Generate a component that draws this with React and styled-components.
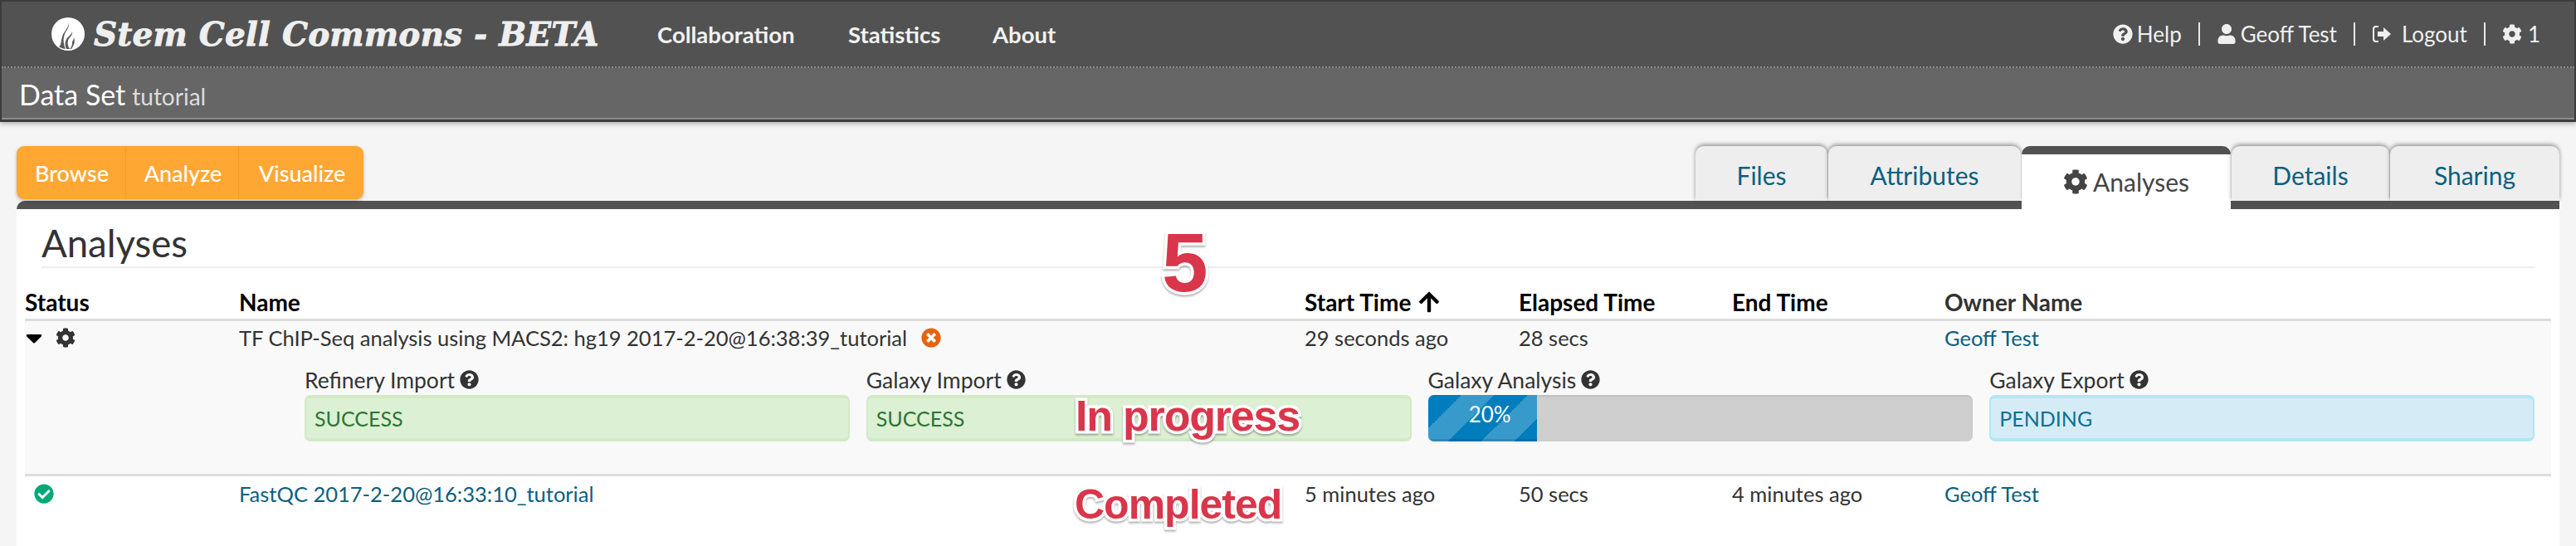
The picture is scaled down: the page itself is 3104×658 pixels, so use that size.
import React from 'react'
import styled, { createGlobalStyle } from 'styled-components'
import {
  FaCog,
  FaQuestionCircle,
  FaUser,
  FaCheckCircle,
  FaTimesCircle,
  FaArrowUp,
  FaCaretDown
} from 'react-icons/fa'

const sans = '"Lato", "Noto Sans", sans-serif'

const GlobalStyle = createGlobalStyle`
  html, body {
    margin: 0;
    padding: 0;
    height: 658px;
    overflow: hidden;
    background: #f5f5f5;
    font-family: ${sans};
    color: #333;
  }
  * { box-sizing: border-box; }
`

const Page = styled.div`
  position: relative;
  width: 3104px;
  height: 658px;
  overflow: hidden;
`

const Header = styled.header`
  border: solid #3c3c3c;
  border-width: 2px 2px 3px;
  box-shadow: 0 2px 6px rgba(0, 0, 0, 0.3);
`

const TopBar = styled.div`
  display: flex;
  align-items: center;
  height: 80px;
  padding: 0 41px 0 60px;
  background: #525252;
  border-bottom: 2px dotted #8a8a8a;
`

const Brand = styled.div`
  display: flex;
  align-items: center;
  gap: 11px;
  width: 730px;
`

const Title = styled.span`
  font-family: "DejaVu Serif", serif;
  font-weight: 700;
  font-style: italic;
  font-size: 39px;
  letter-spacing: 0.2px;
  color: #efefef;
  -webkit-text-stroke: 0.8px #efefef;
  white-space: nowrap;
`

const MainNav = styled.nav`
  display: flex;
  font-weight: 700;
  font-size: 27.5px;
  color: #f2f2f2;
`

const NavLink = styled.a`
  width: ${p => p.$w}px;
`

const UserNav = styled.div`
  display: flex;
  align-items: center;
  margin-left: auto;
  font-size: 26px;
  color: #f0f0f0;
`

const UserItem = styled.span`
  display: flex;
  align-items: center;
  gap: ${p => p.$gap || 5}px;
  white-space: nowrap;

  & svg {
    font-size: 24px;
  }
`

const Sep = styled.span`
  width: 2px;
  height: 28px;
  margin: 0 20px;
  background: #e8e8e8;
`

const SubBar = styled.div`
  display: flex;
  align-items: baseline;
  gap: 8px;
  height: 62px;
  padding: 11px 0 0 21px;
  background: #666;
  border-bottom: 2px solid #8c8c8c;
  color: #fff;
  font-size: 34px;
`

const SubTitle = styled.small`
  font-size: 28px;
  color: #ddd;
`

const Main = styled.main`
  padding: 29px 20px 0;
`

const TopRow = styled.div`
  display: flex;
  justify-content: space-between;
  height: 66px;
`

const ButtonGroup = styled.div`
  display: flex;
  height: 64px;
  width: 418px;
  background: #ffa733;
  border-radius: 9px;
  box-shadow: 0 2px 4px rgba(0, 0, 0, 0.25);
`

const GroupButton = styled.button`
  flex: 0 0 ${p => p.$w}px;
  padding: 0 0 0 2px;
  border: 0;
  background: none;
  font-family: ${sans};
  font-weight: 500;
  font-size: 27px;
  color: #fff;

  & + & {
    border-left: 1px solid #f29c2b;
  }
`

const Tabs = styled.div`
  display: flex;
  gap: 1px;
  position: relative;
  z-index: 1;
`

const Tab = styled.div`
  display: flex;
  align-items: center;
  justify-content: center;
  gap: 6px;
  width: ${p => p.$w}px;
  height: ${p => (p.$active ? 76 : 66)}px;
  padding-top: ${p => (p.$active ? 0 : 4)}px;
  border-radius: 10px 10px 0 0;
  border-top: ${p => (p.$active ? '10px solid #525252' : 0)};
  background: ${p => (p.$active ? '#fff' : '#eee')};
  color: ${p => (p.$active ? '#444' : '#0b5f80')};
  box-shadow: ${p => (p.$active ? 'none' : '0 -2px 5px rgba(0, 0, 0, 0.4)')};
  font-size: 30px;
`

const Panel = styled.section`
  height: 416px;
  padding: 0 10px;
  background: #fff;
  border-top: 10px solid #525252;
  border-radius: 10px 0 0 0;
`

const PanelHead = styled.div`
  margin: 0 19px 0 20px;
  padding-top: 15px;
  height: 71px;
  border-bottom: 2px solid #eee;
`

const Heading = styled.h2`
  margin: 0;
  font-weight: 400;
  font-size: 45.5px;
  line-height: 52px;
  color: #333;
`

const cols = '258px 1284px 258px 257px 256px 1fr'

const HeadRow = styled.div`
  display: grid;
  grid-template-columns: ${cols};
  align-items: center;
  height: 64px;
  padding-top: 20px;
  border-bottom: 3px solid #ddd;
  font-weight: 700;
  font-size: 28px;
  color: #000;
`

const HeadCell = styled.div`
  display: flex;
  align-items: center;
  gap: 8px;
  color: ${p => p.$color || 'inherit'};
`

const Row = styled.div`
  background: ${p => (p.$expanded ? '#f9f9f9' : '#fff')};
  border-bottom: ${p => (p.$expanded ? '3px solid #ddd' : 0)};
  height: ${p => (p.$expanded ? '187px' : 'auto')};
`

const RowCells = styled.div`
  display: grid;
  grid-template-columns: ${cols};
  align-items: center;
  height: ${p => p.$h}px;
  font-size: 25.5px;
  color: #333;
`

const StatusIcons = styled.div`
  display: flex;
  align-items: center;
  gap: 16px;
  padding-left: ${p => p.$indent || 0}px;
  color: #333;
`

const NameCell = styled.div`
  display: flex;
  align-items: center;
  gap: 17px;
`

const TableLink = styled.a`
  color: #0b5f80;
`

const Stages = styled.div`
  display: grid;
  grid-template-columns: repeat(4, 1fr);
  gap: 20px;
  padding: 12px 20px 0 337px;
`

const Stage = styled.div`
  display: flex;
  flex-direction: column;
`

const StageLabel = styled.div`
  display: flex;
  align-items: center;
  gap: 6px;
  height: 37px;
  font-size: 26.5px;
  color: #333;

  & svg {
    font-size: 23px;
  }
`

const StatusBox = styled.div`
  display: flex;
  align-items: center;
  height: 56px;
  padding-left: 10px;
  border: solid ${p => (p.$kind === 'info' ? '#b0e8f3' : '#d3e9c7')};
  border-width: 4px 2px;
  border-radius: 7px;
  background: ${p => (p.$kind === 'info' ? '#d5ecf6' : '#dcf0d4')};
  color: ${p => (p.$kind === 'info' ? '#0f7095' : '#2f7435')};
  font-size: 25px;
`

const ProgressTrack = styled.div`
  height: 56px;
  border-radius: 7px;
  overflow: hidden;
  background: #cfcfcf;
  box-shadow: inset 0 2px 3px rgba(0, 0, 0, 0.08);
`

const ProgressBar = styled.div`
  height: 100%;
  padding: 3px 0 0 18px;
  background-color: #007dbd;
  background-image: linear-gradient(
    -45deg,
    rgba(255, 255, 255, 0.22) 25%,
    transparent 25%,
    transparent 50%,
    rgba(255, 255, 255, 0.22) 50%,
    rgba(255, 255, 255, 0.22) 75%,
    transparent 75%
  );
  background-size: 80px 80px;
  box-shadow: inset 0 -3px 0 rgba(0, 0, 0, 0.12);
  text-align: center;
  font-size: 26px;
  line-height: 40px;
  color: #fff;
`

const Note = styled.div`
  position: absolute;
  left: ${p => p.$x}px;
  top: ${p => p.$y}px;
  font-family: "Liberation Sans", Arial, sans-serif;
  font-weight: 700;
  font-size: ${p => p.$size}px;
  letter-spacing: ${p => p.$spacing || 0}px;
  line-height: 1;
  white-space: nowrap;
  color: #d9364b;
  -webkit-text-stroke: 7px #fff;
  paint-order: stroke fill;
  filter: drop-shadow(0 2px 1px rgba(0, 0, 0, 0.3));
  z-index: 2;
`

const FlameLogo = () => (
  <svg width="40" height="40" viewBox="0 0 40 40" aria-hidden="true">
    <circle cx="20" cy="20" r="20" fill="#fff" />
    <path
      d="M21 6c1 6-3 9-5 14-2 5-2 11 1 18-4-1-6-1-8-3 3-1 2-6 4-12 2-7 8-10 8-17z"
      fill="#5a5a5a"
    />
    <path
      d="M25 17c1 5-4 7-5 11-1 4 0 7 2 10h-4c-2-4-2-8 0-12 2-3 6-5 7-9z"
      fill="#5a5a5a"
    />
    <path
      d="M27 24c2 5 0 10-3 14h-2c3-3 3-6 3-8 0-2 2-3 2-6z"
      fill="#5a5a5a"
    />
  </svg>
)

const SignOutIcon = () => (
  <svg width="24" height="22" viewBox="0 0 24 22" aria-hidden="true">
    <path
      d="M8 2H5C3 2 2 3 2 5v12c0 2 1 3 3 3h3"
      fill="none"
      stroke="currentColor"
      strokeWidth="2"
    />
    <path d="M7 8h7V3l9 8-9 8v-5H7z" fill="currentColor" />
  </svg>
)

const Help = () => <FaQuestionCircle />

const tabs = [
  { label: 'Files', w: 159 },
  { label: 'Attributes', w: 232 },
  { label: 'Analyses', w: 252, active: true },
  { label: 'Details', w: 190 },
  { label: 'Sharing', w: 204 }
]

const App = () => (
  <Page>
    <GlobalStyle />
    <Header>
      <TopBar>
        <Brand>
          <FlameLogo />
          <Title>Stem Cell Commons - BETA</Title>
        </Brand>
        <MainNav>
          <NavLink $w={230}>Collaboration</NavLink>
          <NavLink $w={174}>Statistics</NavLink>
          <NavLink>About</NavLink>
        </MainNav>
        <UserNav>
          <UserItem><FaQuestionCircle /> Help</UserItem>
          <Sep />
          <UserItem><FaUser /> Geoff Test</UserItem>
          <Sep />
          <UserItem $gap={12}><SignOutIcon /> Logout</UserItem>
          <Sep />
          <UserItem $gap={7}><FaCog /> 1</UserItem>
        </UserNav>
      </TopBar>
      <SubBar>
        Data Set <SubTitle>tutorial</SubTitle>
      </SubBar>
    </Header>

    <Main>
      <TopRow>
        <ButtonGroup>
          <GroupButton $w={131}>Browse</GroupButton>
          <GroupButton $w={136}>Analyze</GroupButton>
          <GroupButton $w={151}>Visualize</GroupButton>
        </ButtonGroup>
        <Tabs>
          {tabs.map(t => (
            <Tab key={t.label} $w={t.w} $active={t.active}>
              {t.active && <FaCog />}
              {t.label}
            </Tab>
          ))}
        </Tabs>
      </TopRow>

      <Panel>
        <PanelHead>
          <Heading>Analyses</Heading>
        </PanelHead>

        <HeadRow>
          <HeadCell>Status</HeadCell>
          <HeadCell>Name</HeadCell>
          <HeadCell>Start Time <FaArrowUp /></HeadCell>
          <HeadCell>Elapsed Time</HeadCell>
          <HeadCell>End Time</HeadCell>
          <HeadCell $color="#333">Owner Name</HeadCell>
        </HeadRow>

        <Row $expanded>
          <RowCells $h={40}>
            <StatusIcons>
              <FaCaretDown size={32} color="#000" style={{ margin: '0 -6px 0 -5px' }} />
              <FaCog size={24} />
            </StatusIcons>
            <NameCell>
              TF ChIP-Seq analysis using MACS2: hg19 2017-2-20@16:38:39_tutorial
              <FaTimesCircle size={24} color="#e8620c" />
            </NameCell>
            <div>29 seconds ago</div>
            <div>28 secs</div>
            <div />
            <TableLink>Geoff Test</TableLink>
          </RowCells>
          <Stages>
            <Stage>
              <StageLabel>Refinery Import <Help /></StageLabel>
              <StatusBox>SUCCESS</StatusBox>
            </Stage>
            <Stage>
              <StageLabel>Galaxy Import <Help /></StageLabel>
              <StatusBox>SUCCESS</StatusBox>
            </Stage>
            <Stage>
              <StageLabel>Galaxy Analysis <Help /></StageLabel>
              <ProgressTrack>
                <ProgressBar style={{ width: '20%' }}>20%</ProgressBar>
              </ProgressTrack>
            </Stage>
            <Stage>
              <StageLabel>Galaxy Export <Help /></StageLabel>
              <StatusBox $kind="info">PENDING</StatusBox>
            </Stage>
          </Stages>
        </Row>

        <Row>
          <RowCells $h={42}>
            <StatusIcons $indent={11}>
              <FaCheckCircle size={24} color="#00a878" />
            </StatusIcons>
            <TableLink>FastQC 2017-2-20@16:33:10_tutorial</TableLink>
            <div>5 minutes ago</div>
            <div>50 secs</div>
            <div>4 minutes ago</div>
            <TableLink>Geoff Test</TableLink>
          </RowCells>
        </Row>
      </Panel>
    </Main>

    <Note $x={1400} $y={266} $size={100}>5</Note>
    <Note $x={1296} $y={475} $size={52} $spacing={-1.2}>In progress</Note>
    <Note $x={1295} $y={583} $size={50} $spacing={-1}>Completed</Note>
  </Page>
)

export default App
